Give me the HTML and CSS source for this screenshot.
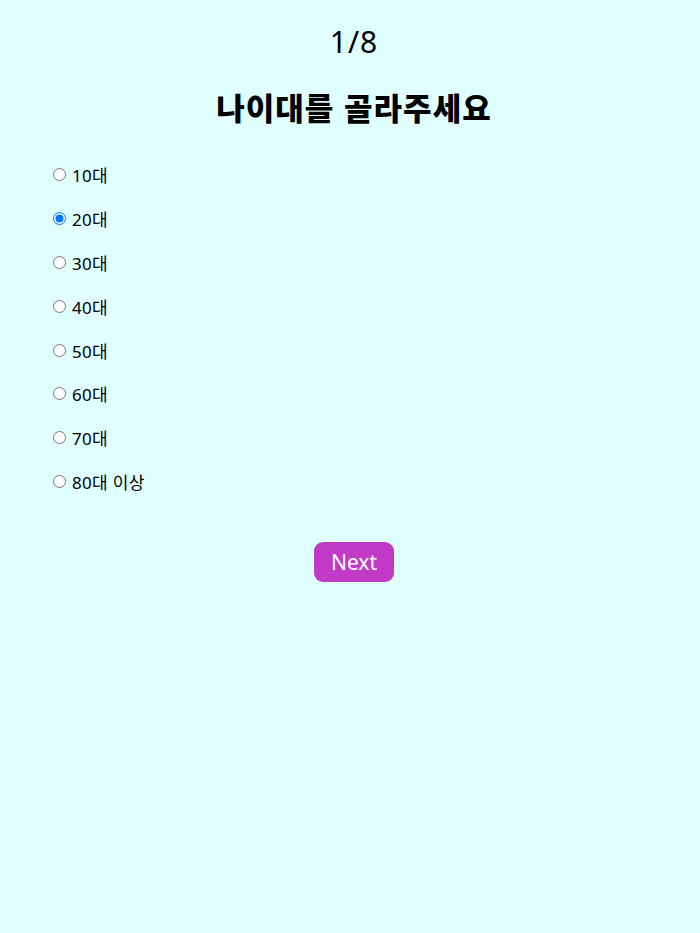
FILE: index.html
```html
<!DOCTYPE html>
<html lang="ko">
<head>
<meta charset="utf-8">
<link rel="stylesheet" href="styles.css">
</head>
<body>
<div class="page">
  <div class="progress">1/8</div>
  <h1 class="title">나이대를 골라주세요</h1>
  <form class="options">
    <label class="option"><input type="radio" name="age"><span>10대</span></label>
    <label class="option"><input type="radio" name="age" checked><span>20대</span></label>
    <label class="option"><input type="radio" name="age"><span>30대</span></label>
    <label class="option"><input type="radio" name="age"><span>40대</span></label>
    <label class="option"><input type="radio" name="age"><span>50대</span></label>
    <label class="option"><input type="radio" name="age"><span>60대</span></label>
    <label class="option"><input type="radio" name="age"><span>70대</span></label>
    <label class="option"><input type="radio" name="age"><span>80대 이상</span></label>
  </form>
  <div class="actions"><button type="button" class="next">Next</button></div>
</div>
</body>
</html>
```
FILE: styles.css
```css
html, body {
  margin: 0;
  padding: 0;
  background: #e0ffff;
  font-family: "Noto Sans CJK KR", "Noto Sans", sans-serif;
  color: #000;
}
.page {
  padding: 20px 40px 20px 48px;
}
.progress {
  text-align: center;
  font-family: "Noto Sans", "Noto Sans CJK KR", sans-serif;
  font-size: 30px;
  line-height: 44px;
  font-weight: 400;
  letter-spacing: 1px;
}
.title {
  text-align: center;
  font-size: 31px;
  font-weight: 900;
  letter-spacing: 1px;
  margin: 21px 0 0;
  line-height: 44px;
}
.options {
  display: flex;
  flex-direction: column;
  margin-top: 24px;
}
.option {
  display: flex;
  align-items: center;
  height: 43.8px;
  font-family: "Noto Sans", "Noto Sans CJK KR", sans-serif;
  font-size: 17px;
  letter-spacing: 0.3px;
}
.option input {
  margin: 0 6px 0 5px;
  width: 13px;
  height: 13px;
}
.actions {
  display: flex;
  justify-content: center;
  margin-top: 39px;
}
.next {
  width: 80px;
  height: 40px;
  border: none;
  border-radius: 9px;
  background: #c03ac6;
  color: #fff;
  font-family: "Noto Sans", sans-serif;
  font-size: 21px;
  padding: 0;
}
```
